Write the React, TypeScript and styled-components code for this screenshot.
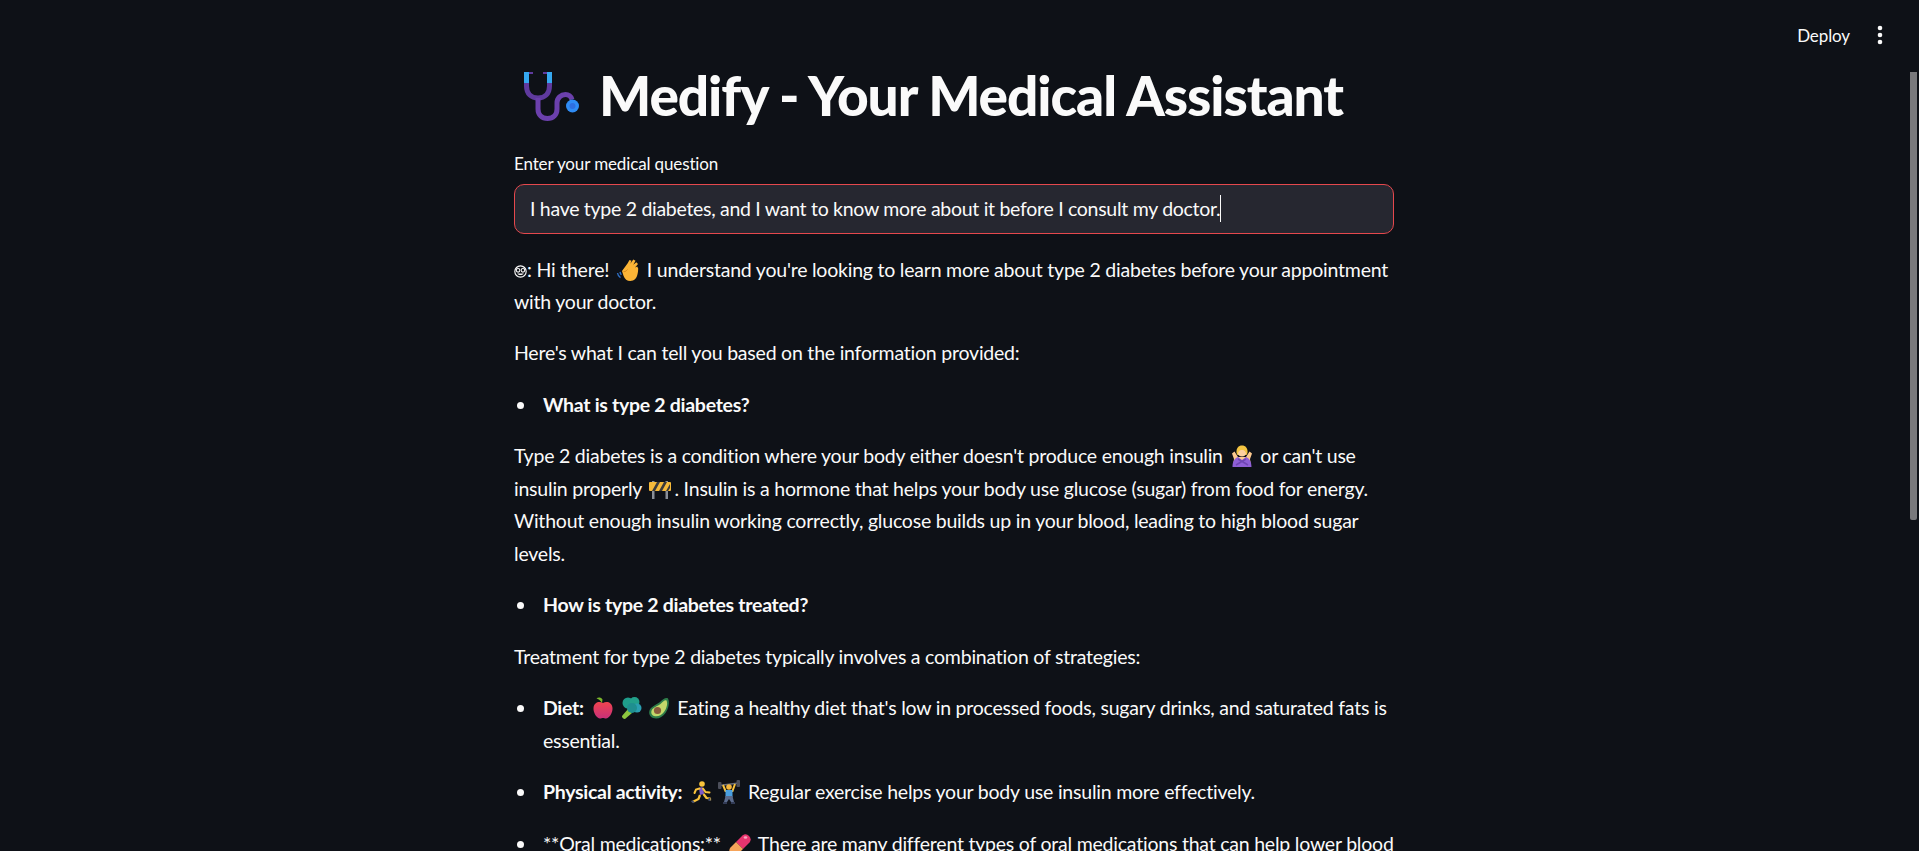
import React from 'react';
import styled, { createGlobalStyle } from 'styled-components';

const GlobalStyle = createGlobalStyle`
  html, body {
    margin: 0;
    height: 100%;
    overflow: hidden;
    background: #0e1117;
  }
  * { box-sizing: border-box; }
`;

const Page = styled.div`
  position: relative;
  height: 100vh;
  overflow: hidden;
  padding-right: 11px;
  background: #0e1117;
  color: #fafafa;
  font-family: "Lato", "Noto Sans", sans-serif;
`;

const Toolbar = styled.div`
  position: absolute;
  top: 0;
  right: 0;
  height: 70px;
  display: flex;
  align-items: center;
  gap: 26px;
  padding-right: 35px;
`;

const DeployButton = styled.span`
  font-size: 17px;
  letter-spacing: -0.1px;
`;

const Scrollbar = styled.div`
  position: absolute;
  top: 72px;
  right: 2px;
  width: 7px;
  height: 448px;
  background: #79797c;
  border-radius: 0 0 2px 2px;
`;

const Content = styled.main`
  width: 880px;
  margin: 0 auto;
  padding-top: 60px;
`;

const Title = styled.h1`
  margin: 0 0 24px;
  height: 70px;
  display: flex;
  align-items: center;
  gap: 19px;
  padding-left: 10px;
  font-size: 55px;
  line-height: 70px;
  font-weight: 900;
  letter-spacing: -1.08px;
`;

const TitleIcon = styled.svg`
  flex: none;
  width: 56px;
  height: 50px;
  margin-top: 4px;
`;

const Label = styled.label`
  display: block;
  font-size: 17px;
  line-height: 20px;
  letter-spacing: -0.13px;
  margin-bottom: 10px;
`;

const InputBox = styled.div`
  height: 50px;
  display: flex;
  align-items: center;
  padding: 0 15px 2px;
  background: #262730;
  border: 1px solid #e5484d;
  border-radius: 10px;
  font-size: 19.5px;
  letter-spacing: -0.29px;
  margin-bottom: 19.5px;
`;

const Caret = styled.span`
  display: inline-block;
  width: 1px;
  height: 27px;
  background: #fafafa;
`;

const Paragraph = styled.p`
  margin: 0 0 18.8px;
  font-size: 19.5px;
  letter-spacing: -0.22px;
  line-height: 32.6px;
`;

const BulletList = styled.ul`
  margin: 0 0 18.8px;
  padding-left: 29px;
  list-style: none;
  font-size: 19.5px;
  letter-spacing: -0.22px;
  line-height: 32.6px;

  strong {
    letter-spacing: -0.29px;
  }
`;

const BulletItem = styled.li`
  position: relative;
  margin-bottom: 18.8px;

  &:last-child {
    margin-bottom: 0;
  }

  &::before {
    content: '';
    position: absolute;
    left: -26px;
    top: 13px;
    width: 7px;
    height: 7px;
    border-radius: 50%;
    background: #fafafa;
  }
`;

const EmojiSvg = styled.svg`
  display: inline-block;
  width: 24px;
  height: 24px;
  margin: 0 2px;
  vertical-align: -5px;
`;

const NerdSvg = styled.svg`
  display: inline-block;
  width: 13px;
  height: 13px;
  vertical-align: -1px;
`;

const NerdGlyph = () => (
  <NerdSvg viewBox="0 0 16 16">
    <circle cx="8" cy="8" r="7" fill="none" stroke="#fafafa" strokeWidth="1.4" />
    <circle cx="5" cy="6.6" r="2.2" fill="none" stroke="#fafafa" strokeWidth="1.3" />
    <circle cx="11" cy="6.6" r="2.2" fill="none" stroke="#fafafa" strokeWidth="1.3" />
    <path d="M4 10.5c2 2.6 6 2.600 8 0z" fill="#fafafa" />
  </NerdSvg>
);

const WaveEmoji = () => (
  <EmojiSvg viewBox="0 0 24 24">
    <path d="M1.500 15c.3 2 1.200 3.600 3 4.600M4 14c.2 1 .6 2 1.400 2.800" fill="none" stroke="#2f6fc4" strokeWidth="1.400" />
    <path d="M6 13 11.500 5.500l2-3.500 2 .8-1.200 3 3-4.300 2.200 1.200-2.200 4 3-2.400 1.700 1.600-3 3.500 2.200-.8 1 2C22 16 21 21 17 22.600c-4.500 1.400-8-.6-9.400-4.600z" fill="#fbb436" />
    <path d="M7.500 13.500c2 .6 3-1 4-2" fill="none" stroke="#d98a1e" strokeWidth="1" />
  </EmojiSvg>
);

const GestureNoEmoji = () => (
  <EmojiSvg viewBox="0 0 24 24">
    <path d="M6.500 9c-.5-5 2-7.500 5.500-7.500S18 4 17.500 9l-1 2h-9z" fill="#f4c542" />
    <circle cx="12" cy="8.500" r="4" fill="#fdd0a0" />
    <path d="M8 9c1-2.500 2.500-3 4-3s3 .5 4 3c.5-3-1-5-4-5s-4.500 2-4 5" fill="#f4c542" />
    <path d="M2 9.500 4.500 7.500l3.500 5.500h8l3.500-5.500 2.500 2L20 15l1 7H3l1-7z" fill="#fdc98f" />
    <path d="M2.500 23c0-6 2.500-9 5.500-10l4 3 4-3c3 1 5.500 4 5.500 10z" fill="#8f5fd6" />
    <path d="M6 21l10-6M18 21 8 15" stroke="#6f45b3" strokeWidth="1.500" />
  </EmojiSvg>
);

const BarrierEmoji = () => (
  <EmojiSvg viewBox="0 0 24 24">
    <rect x="4" y="4" width="2.500" height="18" fill="#8a8f98" />
    <rect x="17.500" y="4" width="2.500" height="18" fill="#8a8f98" />
    <rect x="1" y="5" width="22" height="9" rx="1" fill="#f5b93a" />
    <path d="M4 14l5-9h3l-5 9zM11 14l5-9h3l-5 9zM18 14l4-7v4l-2 3z" fill="#3b3a3c" />
  </EmojiSvg>
);

const AppleEmoji = () => (
  <EmojiSvg viewBox="0 0 24 24">
    <defs>
      <linearGradient id="appleFill" x1="0" y1="0" x2="0" y2="1">
        <stop offset="0" stopColor="#f0444f" />
        <stop offset="1" stopColor="#c9307a" />
      </linearGradient>
    </defs>
    <path d="M12 7c3-2 9-1.500 9.500 5 .3 5-3.500 10.500-6.500 10.500-1.200 0-2-.5-3-.5s-1.800.5-3 .5C6 22.500 2.200 17 2.500 12 3 5.500 9 5 12 7z" fill="url(#appleFill)" />
    <path d="M11 7C9.500 4.500 7.500 3 5.500 2.500 7 1 10 1 11.500 3.500z" fill="#7bb62c" />
  </EmojiSvg>
);

const BroccoliEmoji = () => (
  <EmojiSvg viewBox="0 0 24 24">
    <path d="M3 20l6-7 4 4-7 6c-1 .5-3.500-1.500-3-3z" fill="#8cc63f" />
    <circle cx="9" cy="7" r="5.500" fill="#1f9d8b" />
    <circle cx="15.500" cy="6" r="5" fill="#22a08a" />
    <circle cx="18" cy="12" r="4.500" fill="#2a9fb0" />
    <circle cx="13" cy="12" r="5" fill="#1f8f8f" />
  </EmojiSvg>
);

const AvocadoEmoji = () => (
  <EmojiSvg viewBox="0 0 24 24">
    <path d="M21 2.500C23 6 21.500 13 18.500 17c-3 4.500-8 6.500-12.500 5C2 20.500.8 15.500 4 12c3-3 6-3.500 9-6 2.500-2.500 6-5 8-3.500z" fill="#2e7d4a" />
    <path d="M19.500 4.500c1.500 3 .2 8-2.500 11.500-2.500 3.500-6.500 5-10 4-3-1-3.500-4.500-1.500-7 2.500-2.500 5.500-3 8-5 2-2 4.500-4.500 6-3.500z" fill="#c3d86a" />
    <circle cx="10.500" cy="14.500" r="3.600" fill="#8a5a3c" />
  </EmojiSvg>
);

const RunnerEmoji = () => (
  <EmojiSvg viewBox="0 0 24 24">
    <circle cx="13" cy="4" r="2.800" fill="#f9c33c" />
    <path d="M10 8c2-1.500 4-1 4.500 1l.5 5-4 1z" fill="#7e5bc9" />
    <path d="M14 8.500l2.500 3.500 4 .5M10.500 8.500 7 9.500 5.500 13" fill="none" stroke="#f9c33c" strokeWidth="2" strokeLinecap="round" />
    <path d="M11 15l-1.500 4-6 3M14.500 14l3 4 3.500 .5v2" fill="none" stroke="#f9c33c" strokeWidth="2.200" strokeLinejoin="round" />
    <path d="M2.500 21l2.500 1.500M20.500 18v3" stroke="#3f4a6b" strokeWidth="2" />
  </EmojiSvg>
);

const LifterEmoji = () => (
  <EmojiSvg viewBox="0 0 24 24">
    <path d="M2 5.500 22 3" stroke="#6b6f7c" strokeWidth="1.400" />
    <rect x="1" y="2" width="3.500" height="7" rx="1" fill="#4b4e5a" />
    <rect x="19.500" y="0" width="3.500" height="7" rx="1" fill="#4b4e5a" />
    <circle cx="12" cy="7" r="2.800" fill="#f4b63c" />
    <path d="M6 5l2.500 6h7L18 4" fill="none" stroke="#f9c33c" strokeWidth="2" />
    <rect x="8.500" y="10" width="7" height="7" fill="#4a9fe0" />
    <path d="M8.500 16h7l1.500 6h-3l-2-3-2 3H7z" fill="#5b6b8c" />
    <path d="M6 23h4M14 23h4" stroke="#3f4a6b" strokeWidth="1.500" />
  </EmojiSvg>
);

const PillEmoji = () => (
  <EmojiSvg viewBox="0 0 24 24">
    <path d="M8 10 14.500 3.500a5 5 0 0 1 7 7L15 17z" fill="#e8346e" />
    <path d="M8 10l7 7-5.500 5.500a5 5 0 0 1-7-7z" fill="#f6a45a" />
    <ellipse cx="17.500" cy="5.500" rx="1.800" ry="1.200" fill="#f8a3bd" />
  </EmojiSvg>
);

const StethoscopeEmoji = () => (
  <TitleIcon viewBox="0 0 56 50" fill="none">
    <path d="M2.500 8v6c0 8 5 12 11.500 12s11.500-4 11.500-12V8" stroke="#5f3a9e" strokeWidth="5" />
    <path d="M14 26v11c0 6 4 9.500 9.500 9.500S33 43 33 37v-6c0-5 4-8.500 8.500-8.500 3.500 0 5.500 2 6.500 5" stroke="#6b40ac" strokeWidth="5" />
    <rect x="0" y="0" width="5" height="11" fill="#35a8f0" />
    <rect x="23" y="0" width="5" height="11" fill="#35a8f0" />
    <path d="M5 1h4M23 1h-4" stroke="#5f3a9e" strokeWidth="2" />
    <circle cx="48.500" cy="34" r="6.500" fill="#2f8cf5" />
    <circle cx="48.500" cy="34" r="3" fill="#2f6fe0" />
  </TitleIcon>
);

const MenuDots = () => (
  <svg width="8" height="20" viewBox="0 0 8 20">
    <circle cx="4" cy="3" r="2.300" fill="#fafafa" />
    <circle cx="4" cy="10" r="2.300" fill="#fafafa" />
    <circle cx="4" cy="17" r="2.300" fill="#fafafa" />
  </svg>
);

export default function App() {
  return (
    <Page>
      <GlobalStyle />
      <Content>
        <Title>
          <StethoscopeEmoji />
          Medify - Your Medical Assistant
        </Title>
        <Label>Enter your medical question</Label>
        <InputBox>
          I have type 2 diabetes, and I want to know more about it before I consult my doctor.
          <Caret />
        </InputBox>

        <Paragraph>
          <NerdGlyph />: Hi there! <WaveEmoji /> I understand you're looking to learn more about type 2 diabetes before your appointment with your doctor.
        </Paragraph>
        <Paragraph>Here's what I can tell you based on the information provided:</Paragraph>

        <BulletList>
          <BulletItem><strong>What is type 2 diabetes?</strong></BulletItem>
        </BulletList>

        <Paragraph>
          Type 2 diabetes is a condition where your body either doesn't produce enough insulin <GestureNoEmoji /> or can't use insulin properly <BarrierEmoji />. Insulin is a hormone that helps your body use glucose (sugar) from food for energy. Without enough insulin working correctly, glucose builds up in your blood, leading to high blood sugar levels.
        </Paragraph>

        <BulletList>
          <BulletItem><strong>How is type 2 diabetes treated?</strong></BulletItem>
        </BulletList>

        <Paragraph>Treatment for type 2 diabetes typically involves a combination of strategies:</Paragraph>

        <BulletList>
          <BulletItem>
            <strong>Diet:</strong> <AppleEmoji /><BroccoliEmoji /><AvocadoEmoji /> Eating a healthy diet that's low in processed foods, sugary drinks, and saturated fats is essential.
          </BulletItem>
          <BulletItem>
            <strong>Physical activity:</strong> <RunnerEmoji /><LifterEmoji /> Regular exercise helps your body use insulin more effectively.
          </BulletItem>
          <BulletItem>
            **Oral medications:** <PillEmoji /> There are many different types of oral medications that can help lower blood sugar levels.
          </BulletItem>
        </BulletList>
      </Content>
      <Toolbar>
        <DeployButton>Deploy</DeployButton>
        <MenuDots />
      </Toolbar>
      <Scrollbar />
    </Page>
  );
}
